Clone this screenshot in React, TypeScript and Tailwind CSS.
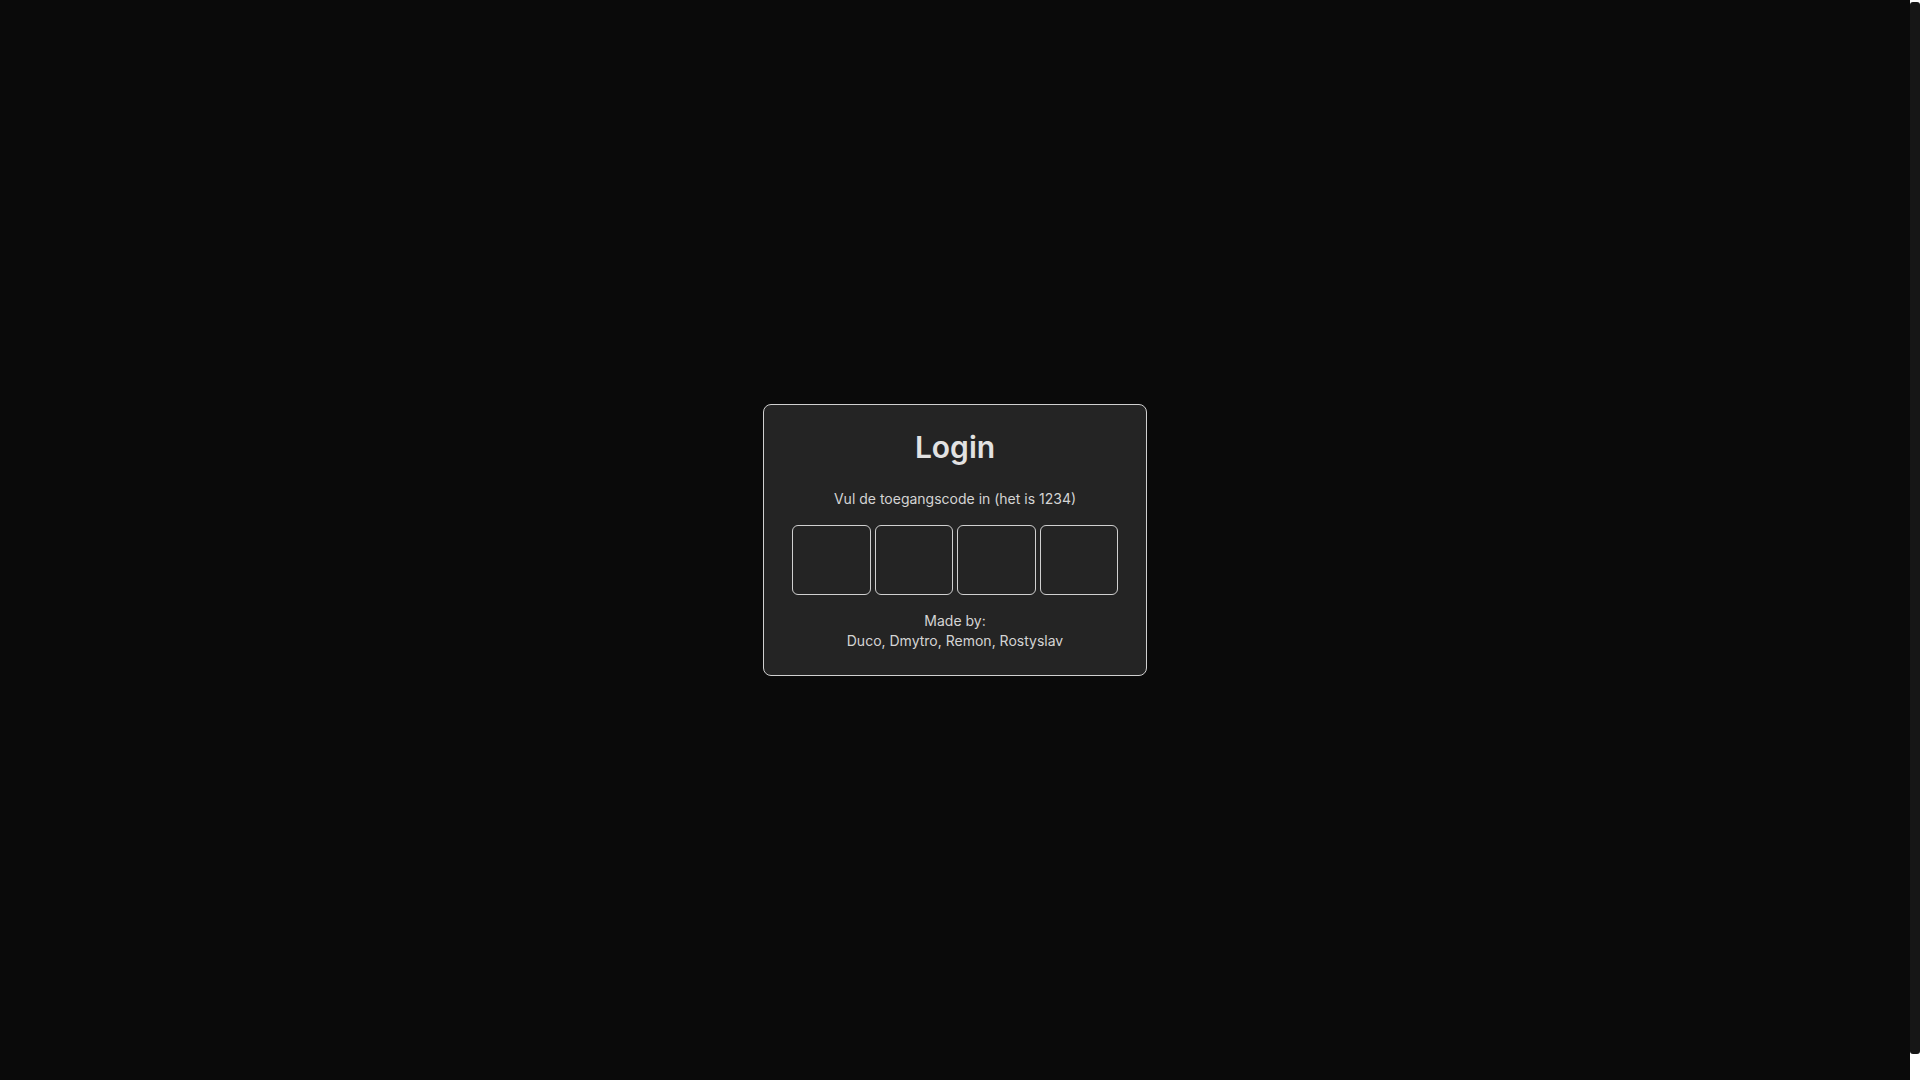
import * as React from "react";

const DIGITS = 4;

function CodeInputs() {
  const [code, setCode] = React.useState<string[]>(Array(DIGITS).fill(""));

  return (
    <div className="mt-4 flex gap-1">
      {code.map((digit, i) => (
        <input
          key={i}
          type="text"
          inputMode="numeric"
          maxLength={1}
          value={digit}
          onChange={(e) => {
            const next = [...code];
            next[i] = e.target.value.slice(-1);
            setCode(next);
          }}
          aria-label={`Cijfer ${i + 1}`}
          className="h-[70px] w-full min-w-0 flex-1 rounded-md border border-[#d0d0d0] bg-transparent text-center text-2xl text-[#e5e5e5] outline-none"
        />
      ))}
    </div>
  );
}

// page scrollbar as seen in the screenshot: white track, dark rounded thumb
function Scrollbar() {
  return (
    <div className="flex h-screen w-[10px] shrink-0 justify-center bg-white pt-[2px] pb-[26px]">
      <div className="w-[6px] flex-1 rounded-[3px] bg-[#161616]" />
    </div>
  );
}

export default function App() {
  return (
    <div className="flex h-screen overflow-hidden bg-[#0a0a0a] font-['Inter','Liberation_Sans',sans-serif]">
      <main className="flex min-w-0 flex-1 items-center justify-center">
        <div className="w-96 rounded-lg border border-[#d0d0d0] bg-[#242424] px-7 py-6 text-center">
          <h1 className="text-3xl font-semibold text-[#e2e2e2]">Login</h1>
          <p className="mt-6 text-sm text-[#d4d4d4]">Vul de toegangscode in (het is 1234)</p>
          <CodeInputs />
          <div className="mt-4 text-sm text-[#d4d4d4]">
            <p>Made by:</p>
            <p>Duco, Dmytro, Remon, Rostyslav</p>
          </div>
        </div>
      </main>
      <Scrollbar />
    </div>
  );
}
